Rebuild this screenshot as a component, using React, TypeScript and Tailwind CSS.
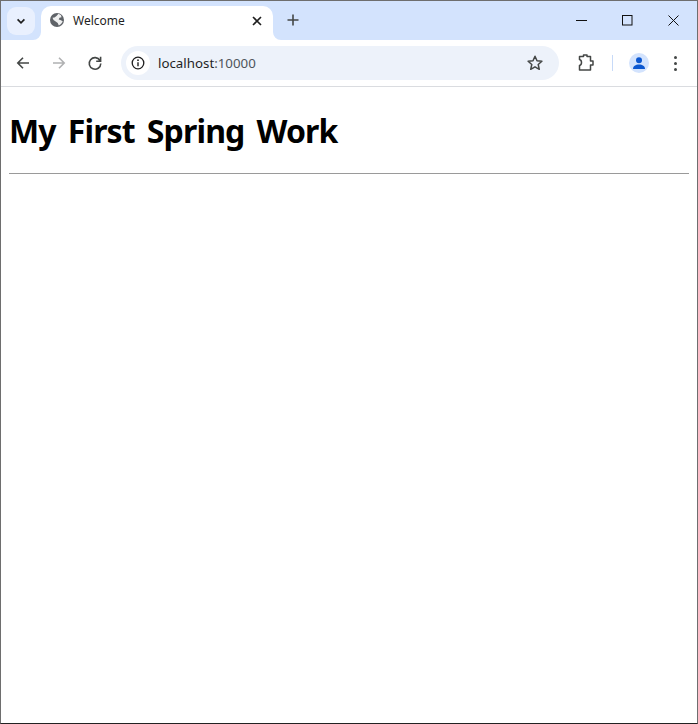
import React from "react";

const Flare = ({ side }: { side: "l" | "r" }) => (
  <svg width="8" height="8" viewBox="0 0 8 8" className={side === "l" ? "absolute bottom-0 -left-2" : "absolute bottom-0 -right-2"}>
    <path d={side === "l" ? "M8 0V8H0A8 8 0 0 0 8 0Z" : "M0 0V8H8A8 8 0 0 1 0 0Z"} fill="#fff" />
  </svg>
);

export default function App() {
  return (
    <div className="w-[698px] h-[724px] flex flex-col border border-[#6e6e6e] border-b-[#222] bg-white overflow-hidden font-['Noto_Sans',sans-serif]">
      <div className="h-[39px] shrink-0 bg-[#d3e3fd] flex items-end relative">
        <div className="w-[28px] h-[28px] mb-[5px] ml-[6px] rounded-[9px] bg-[#e9f0fe] flex items-center justify-center">
          <svg width="12" height="12" viewBox="0 0 12 12"><path d="M2.6 4.4 6 7.8l3.4-3.4" fill="none" stroke="#1f1f1f" strokeWidth="1.7" /></svg>
        </div>
        <div className="relative w-[232px] h-[34px] ml-[6px] bg-white rounded-t-[10px] flex items-center">
          <Flare side="l" />
          <Flare side="r" />
          <svg width="16" height="16" viewBox="0 0 16 16" className="ml-[8px] mb-[6px]">
            <circle cx="8" cy="8" r="7" fill="#5f6368" />
            <path d="M9.500 1.800 12 3.200 12.500 5.300 10.500 5.800 9.700 7.600 12 8.300 13.800 9.500 12 12 9.800 13.500 8.700 11 6.700 9.500 4.500 8 3.500 5.800 5.500 5.500 7.500 4Z" fill="#fff" opacity=".9" />
          </svg>
          <span className="ml-[8px] mb-[5px] text-[12px] leading-[16px] text-[#1f1f1f]">Welcome</span>
          <svg width="10" height="10" viewBox="0 0 10 10" className="ml-auto mr-[11px] mb-[5px]"><path d="M1 1l8 8M9 1 1 9" stroke="#1f1f1f" strokeWidth="1.600" /></svg>
        </div>
        <svg width="12" height="12" viewBox="0 0 12 12" className="ml-[14px] mb-[14px]"><path d="M6 .5v11M.5 6h11" stroke="#444746" strokeWidth="1.600" /></svg>
        <div className="ml-auto flex items-center mb-[14px] mr-[18px]">
          <svg width="11" height="11" viewBox="0 0 11 11"><path d="M0 5.500h11" stroke="#111" strokeWidth="1" /></svg>
          <svg width="11" height="11" viewBox="0 0 11 11" className="ml-[35px]"><rect x=".5" y=".5" width="9.500" height="9.500" fill="none" stroke="#111" /></svg>
          <svg width="11" height="11" viewBox="0 0 11 11" className="ml-[35px]"><path d="M.5.500l10 10M10.500.500l-10 10" stroke="#111" strokeWidth="1" /></svg>
        </div>
      </div>
      <div className="h-[47px] shrink-0 bg-white border-b border-[#dadce0] flex items-center rounded-t-[8px] relative">
        <svg width="16" height="16" viewBox="0 0 16 16" className="ml-[14px]"><path d="M14 8H3M8 2.800 2.800 8 8 13.200" fill="none" stroke="#444746" strokeWidth="1.600" /></svg>
        <svg width="16" height="16" viewBox="0 0 16 16" className="ml-[20px]"><path d="M2 8h11M8 2.800 13.200 8 8 13.200" fill="none" stroke="#b0b1b2" strokeWidth="1.600" /></svg>
        <svg width="16" height="16" viewBox="0 0 16 16" className="ml-[20px]"><path d="M13 5.500A5.800 5.800 0 1 0 13.800 8.600M13.600 1.800v4.400H9.200" fill="none" stroke="#444746" strokeWidth="1.600" /></svg>
        <div className="ml-[18px] w-[438px] h-[34px] bg-[#edf2fa] rounded-full flex items-center">
          <div className="ml-[5px] w-[24px] h-[24px] rounded-full bg-white flex items-center justify-center">
            <svg width="16" height="16" viewBox="0 0 16 16"><circle cx="8" cy="8" r="5.800" fill="none" stroke="#1f1f1f" strokeWidth="1.300" /><path d="M8 7.200v4" stroke="#1f1f1f" strokeWidth="1.400" /><circle cx="8" cy="5.200" r=".9" fill="#1f1f1f" /></svg>
          </div>
          <span className="ml-[8px] text-[13.3px] leading-[20px] text-[#1f1f1f]">localhost<span className="text-[#4f555b]">:10000</span></span>
          <svg width="18" height="18" viewBox="0 0 18 18" className="ml-auto mr-[15px]"><path d="m9 2.300 2 4.500 4.900.5-3.700 3.200 1.100 4.800L9 12.800l-4.300 2.500 1.100-4.800L2.100 7.300 7 6.800Z" fill="none" stroke="#444746" strokeWidth="1.500" strokeLinejoin="round" /></svg>
        </div>
        <svg width="18" height="18" viewBox="0 0 18 18" className="ml-[18px]"><path d="M2.500 2.500H6.500V1H10V2.500H13.500V7H16V11H13.500V16H2.500V11.500Q4.500 11 4.500 8.500T2.500 5.500Z" fill="none" stroke="#444746" strokeWidth="1.500" strokeLinejoin="round" /></svg>
        <div className="ml-[17px] w-[1px] h-[16px] bg-[#c7daf8]" />
        <div className="ml-[16px] w-[20px] h-[20px] rounded-full bg-[#d3e3fd] flex items-center justify-center">
          <svg width="14" height="14" viewBox="0 0 14 14"><circle cx="7" cy="4.200" r="3" fill="#0b57d0" /><path d="M1 13c0-3 2.500-4.500 6-4.500s6 1.500 6 4.500Z" fill="#0b57d0" /></svg>
        </div>
        <div className="ml-[25px] flex flex-col gap-[3px]">
          <div className="w-[3px] h-[3px] rounded-full bg-[#444746]" />
          <div className="w-[3px] h-[3px] rounded-full bg-[#444746]" />
          <div className="w-[3px] h-[3px] rounded-full bg-[#444746]" />
        </div>
      </div>
      <div className="flex-1 px-[8px] pt-[20px]">
        <h1 className="text-[32px] leading-[48px] font-bold text-black tracking-[-0.85px] [word-spacing:4.5px]">My First Spring Work</h1>
        <hr className="mt-[18px] border-0 h-[1px] bg-[#9a9a9a]" />
      </div>
    </div>
  );
}
